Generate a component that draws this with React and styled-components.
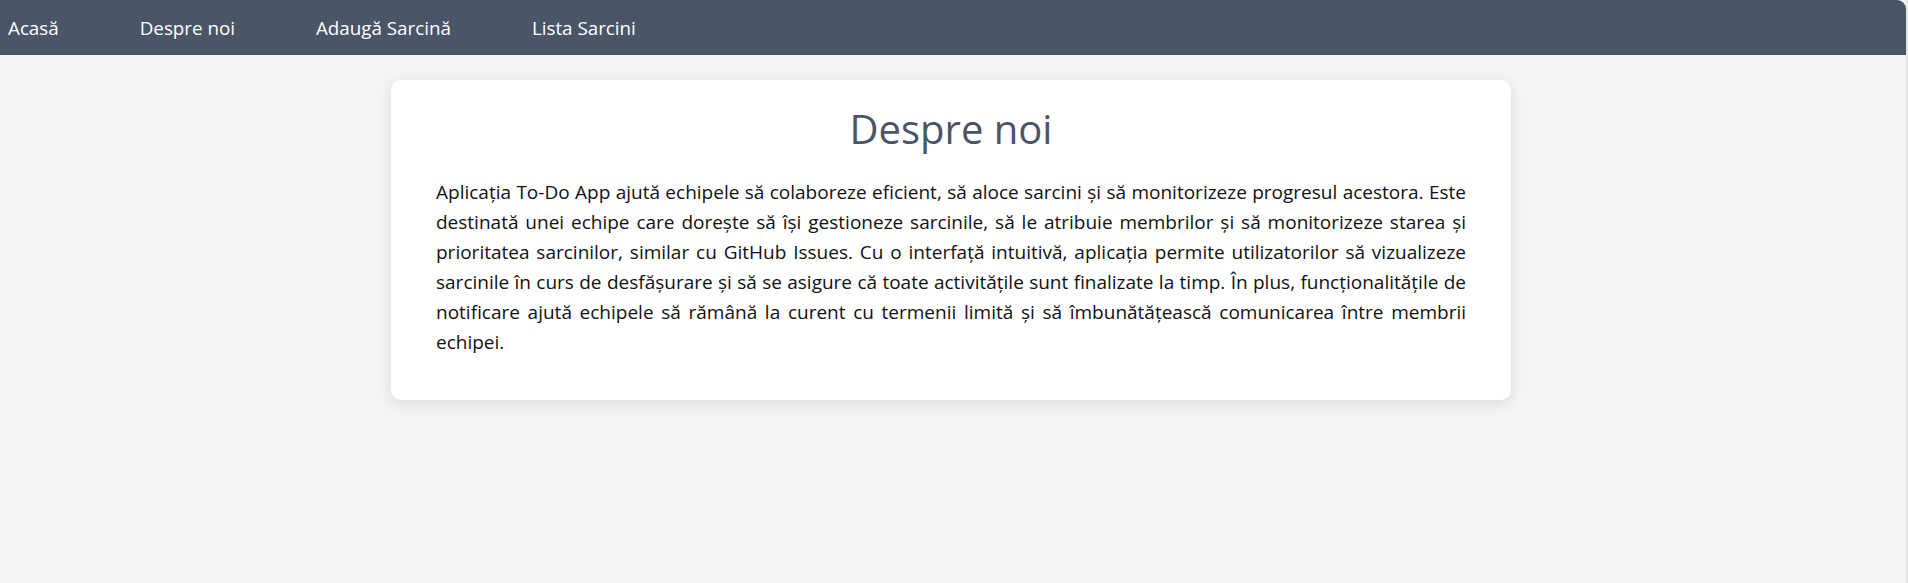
import React from "react";
import styled, { createGlobalStyle } from "styled-components";

const GlobalStyle = createGlobalStyle`
  html, body {
    margin: 0;
    padding: 0;
    background: #f4f4f3;
    font-family: "Open Sans", "Noto Sans", "Liberation Sans", sans-serif;
  }
  * {
    box-sizing: border-box;
  }
`;

const Page = styled.div`
  min-height: 583px;
  border-right: 2px solid #e4e4e4;
`;

const NavBar = styled.nav`
  display: flex;
  align-items: center;
  gap: 81px;
  height: 55px;
  padding: 0 8px;
  background: #4a5568;
  border-top-right-radius: 9px;
`;

const NavLink = styled.a`
  color: #ffffff;
  font-size: 18.8px;
  text-decoration: none;
  cursor: pointer;
`;

const Content = styled.main`
  padding: 25px 4px 0 0;
`;

const Card = styled.section`
  width: 1120px;
  margin: 0 auto;
  padding: 25px 45px 43px;
  background: #ffffff;
  border-radius: 10px;
  box-shadow: 0 4px 14px rgba(0, 0, 0, 0.1);
`;

const Title = styled.h1`
  margin: 0 0 24px;
  text-align: center;
  font-size: 40px;
  font-weight: 400;
  line-height: 1.2;
  color: #4a5568;
`;

const Text = styled.p`
  margin: 0;
  font-size: 19px;
  line-height: 30px;
  text-align: justify;
  color: #111111;
`;

const links = ["Acasă", "Despre noi", "Adaugă Sarcină", "Lista Sarcini"];

const App = () => {
  return (
    <Page>
      <GlobalStyle />
      <NavBar>
        {links.map((label) => (
          <NavLink key={label}>{label}</NavLink>
        ))}
      </NavBar>
      <Content>
        <Card>
          <Title>Despre noi</Title>
          <Text>
            Aplicația To-Do App ajută echipele să colaboreze eficient, să aloce
            sarcini și să monitorizeze progresul acestora. Este destinată unei
            echipe care dorește să își gestioneze sarcinile, să le atribuie
            membrilor și să monitorizeze starea și prioritatea sarcinilor,
            similar cu GitHub Issues. Cu o interfață intuitivă, aplicația
            permite utilizatorilor să vizualizeze sarcinile în curs de
            desfășurare și să se asigure că toate activitățile sunt finalizate
            la timp. În plus, funcționalitățile de notificare ajută echipele să
            rămână la curent cu termenii limită și să îmbunătățească
            comunicarea între membrii echipei.
          </Text>
        </Card>
      </Content>
    </Page>
  );
};

export default App;
